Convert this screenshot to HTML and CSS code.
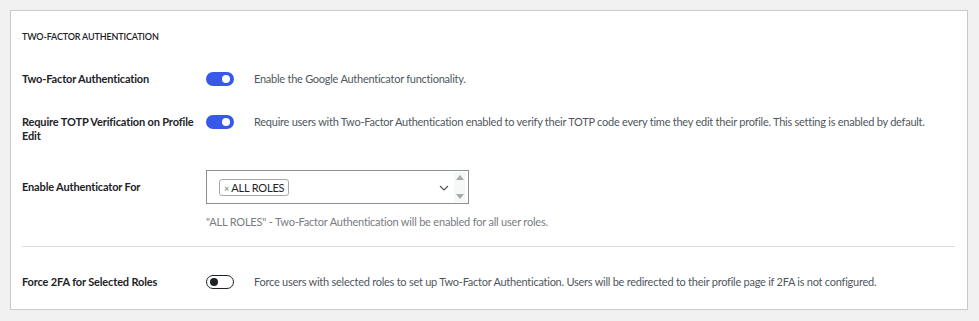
FILE: index.html
```html
<!DOCTYPE html>
<html lang="en">
<head>
    <meta charset="UTF-8">
    <title>Two-Factor Authentication</title>
    <link rel="stylesheet" href="styles.css">
</head>
<body>
    <div class="card">
        <h2 class="section-title">Two-Factor Authentication</h2>

        <div class="row row-first">
            <div class="label">Two-Factor Authentication</div>
            <div class="control">
                <span class="toggle on"></span>
                <span class="desc">Enable the Google Authenticator functionality.</span>
            </div>
        </div>

        <div class="row">
            <div class="label">Require TOTP Verification on Profile Edit</div>
            <div class="control">
                <span class="toggle on"></span>
                <span class="desc">Require users with Two-Factor Authentication enabled to verify their TOTP code every time they edit their profile. This setting is enabled by default.</span>
            </div>
        </div>

        <div class="row row-select">
            <div class="label label-tall">Enable Authenticator For</div>
            <div class="control-col">
                <div class="select">
                    <span class="tag"><span class="tag-x">&times;</span> ALL ROLES</span>
                    <svg class="chevron" width="10" height="6" viewBox="0 0 10 6"><path d="M1 1l4 4 4-4" fill="none" stroke="#50575e" stroke-width="1.2"/></svg>
                    <span class="spinner">
                        <svg width="10" height="26" viewBox="0 0 10 26"><path d="M1 6h8L5 1z" fill="#a7aaad"/><path d="M1 20h8l-4 5z" fill="#a7aaad"/></svg>
                    </span>
                </div>
                <p class="help">"ALL ROLES" - Two-Factor Authentication will be enabled for all user roles.</p>
            </div>
        </div>

        <hr class="divider">

        <div class="row row-last">
            <div class="label">Force 2FA for Selected Roles</div>
            <div class="control">
                <span class="toggle off"></span>
                <span class="desc">Force users with selected roles to set up Two-Factor Authentication. Users will be redirected to their profile page if 2FA is not configured.</span>
            </div>
        </div>
    </div>
</body>
</html>
```

FILE: styles.css
```css
body {
    margin: 0;
    padding: 10px;
    background: #f0f0f1;
    font-family: Lato, "Noto Sans", sans-serif;
    color: #1d2327;
}

.card {
    width: 958px;
    height: 300px;
    box-sizing: border-box;
    background: #fff;
    border: 1px solid #c9cacc;
    padding: 19px 12px 0 11px;
}

.section-title {
    margin: 0 0 13px;
    font-size: 9px;
    line-height: 14px;
    font-weight: 600;
    letter-spacing: -0.15px;
    text-transform: uppercase;
}

.row {
    display: flex;
    padding: 15px 0;
}

.row-first {
    padding-bottom: 14px;
}

.label {
    width: 184px;
    flex-shrink: 0;
    padding-right: 8px;
    box-sizing: border-box;
    font-size: 11px;
    line-height: 14px;
    font-weight: 700;
    letter-spacing: -0.15px;
}

.control {
    display: flex;
    align-items: flex-start;
    gap: 20px;
}

.desc {
    font-size: 11px;
    line-height: 14px;
    letter-spacing: -0.25px;
    color: #50575e;
}

.toggle {
    position: relative;
    flex-shrink: 0;
    width: 28px;
    height: 14px;
    box-sizing: border-box;
    border-radius: 7px;
}

.toggle::after {
    content: "";
    position: absolute;
    top: 3px;
    width: 8px;
    height: 8px;
    border-radius: 50%;
}

.toggle.on {
    background: #3858e9;
}

.toggle.on::after {
    right: 4px;
    top: 3px;
    background: #fff;
}

.toggle.off {
    border: 1px solid #1d2327;
    background: #fff;
}

.toggle.off::after {
    left: 3px;
    top: 2px;
    background: #1d2327;
}

.row-select {
    padding: 12px 0 17px;
}

.label-tall {
    line-height: 34px;
}

.select {
    position: relative;
    display: flex;
    align-items: center;
    width: 263px;
    height: 34px;
    box-sizing: border-box;
    border: 1px solid #8c8f94;
    padding: 0 2px 0 12px;
}

.tag {
    display: inline-block;
    height: 17px;
    box-sizing: border-box;
    padding: 0 4px;
    border: 1px solid #a7aaad;
    border-radius: 3px;
    font-size: 11px;
    line-height: 15px;
    letter-spacing: -0.2px;
    color: #1d2327;
}

.tag-x {
    color: #787c82;
    font-size: 9px;
}

.chevron {
    margin-left: auto;
    margin-right: 5px;
    margin-top: 2px;
}

.spinner {
    display: flex;
    align-items: center;
    justify-content: center;
    width: 12px;
    height: 30px;
    background: #f6f7f7;
}

.help {
    margin: 11px 0 0;
    font-size: 11px;
    line-height: 14px;
    letter-spacing: -0.2px;
    color: #787c82;
}

.divider {
    margin: 0;
    border: 0;
    border-top: 1px solid #dcdcde;
}

.row-last {
    padding-top: 28px;
}
```
